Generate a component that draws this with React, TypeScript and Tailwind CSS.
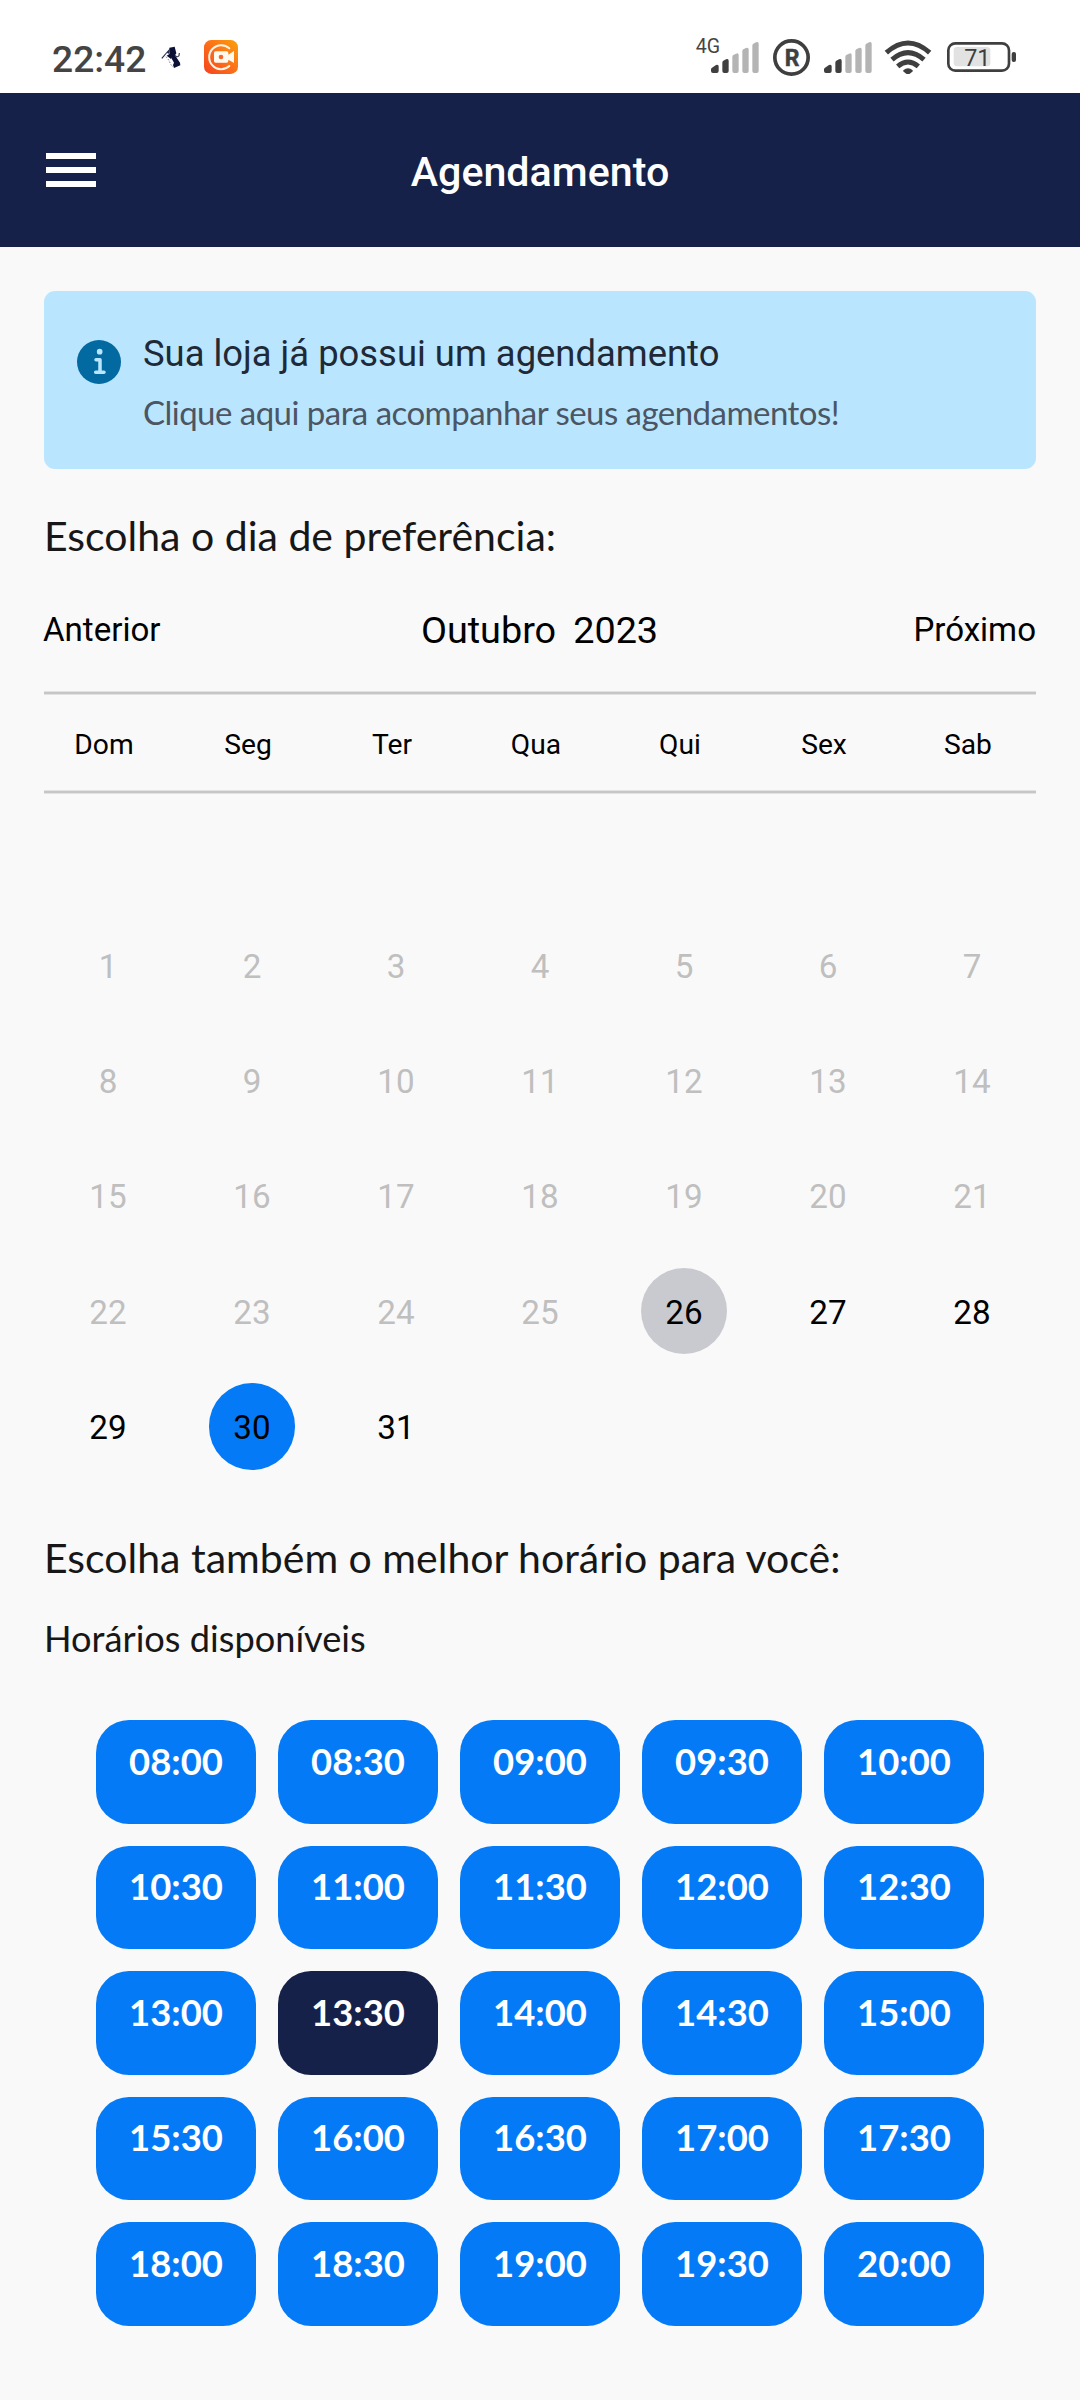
const weekdays = ["Dom", "Seg", "Ter", "Qua", "Qui", "Sex", "Sab"];
const days = Array.from({ length: 31 }, (_, i) => i + 1);
const today = 26;
const selectedDay = 30;
const times = Array.from({ length: 25 }, (_, i) => {
  const hour = String(8 + Math.floor(i / 2)).padStart(2, "0");
  return `${hour}:${i % 2 ? "30" : "00"}`;
});
const selectedTime = "13:30";

function RunnerIcon() {
  return (
    <svg className="ml-[9px] h-[34px] w-[34px]" viewBox="0 0 102 102">
      <path d="M46 23 62 20 67 40 63 46 78 68 79 76 60 84 57 75 60 68 47 45z" fill="#0b1136" />
      <path d="M22 54 48 25 46 42 39 39 25 56z" fill="#2b2f4f" />
      <path d="M38 47 50 40 52 58z" fill="#0b1136" />
      <path d="M63 46q6 8 12 1l1-8" fill="none" stroke="#3b3f5b" strokeWidth="3.5" />
      <path d="M36 50l8 10 7 14 6 7" fill="none" stroke="#80839a" strokeWidth="3" strokeDasharray="5 4" />
    </svg>
  );
}

function RecorderIcon() {
  return (
    <svg className="ml-[16px] h-[34px] w-[34px]" viewBox="0 0 102 102">
      <defs>
        <linearGradient id="rec" x1="1" y1="0" x2="0" y2="1">
          <stop offset="0" stopColor="#fba10b" />
          <stop offset="0.5" stopColor="#fb6f19" />
          <stop offset="1" stopColor="#f5421f" />
        </linearGradient>
      </defs>
      <rect width="102" height="102" rx="22" fill="url(#rec)" />
      <path d="M76 25A36 36 0 1 0 76 78" fill="none" stroke="#fff3e6" strokeWidth="6" strokeLinecap="round" />
      <path d="M35 34h33q5 0 5 5v5l17-11v36l-17-10v4q0 5-5 5H35q-5 0-5-5V39q0-5 5-5z" fill="#fffaf0" />
      <circle cx="51" cy="51" r="7" fill="#f9652a" />
    </svg>
  );
}

function SignalIcon({ className }: { className: string }) {
  return (
    <svg className={className} viewBox="0 0 144 93">
      <path d="M0 82q0-3 3-5l12-8q8-2 8 4v14q0 6-6 6H6q-6 0-6-6z" fill="#3f3f3f" />
      <path d="M34 62q0-4 3-6l8-4q8-3 8 4v31q0 6-6 6h-7q-6 0-6-6z" fill="#3f3f3f" />
      <path d="M64 45q0-4 3-6l8-4q8-3 8 4v48q0 6-6 6h-7q-6 0-6-6z" fill="#b4b4b4" />
      <path d="M94 28q0-4 3-6l8-4q8-3 8 4v65q0 6-6 6h-7q-6 0-6-6z" fill="#b4b4b4" />
      <path d="M124 11q0-4 3-6l8-4q8-3 8 4v82q0 6-6 6h-7q-6 0-6-6z" fill="#b4b4b4" />
    </svg>
  );
}

function RegisteredIcon() {
  return (
    <svg className="ml-[14px] h-[37px] w-[37px]" viewBox="0 0 111 111">
      <circle cx="55.5" cy="55.5" r="50" fill="none" stroke="#3f3f3f" strokeWidth="11" />
      <text x="57" y="80" textAnchor="middle" fontSize="69" fontWeight="700" fill="#3f3f3f" stroke="#3f3f3f" strokeWidth="1.5">
        R
      </text>
    </svg>
  );
}

function WifiIcon() {
  return (
    <svg className="ml-[12px] h-[34px] w-[48px]" viewBox="0 0 144 102">
      <g fill="none" stroke="#3f3f3f" strokeWidth="15">
        <path d="M7 38Q72-20 137 38" />
        <path d="M24 59Q72 17 120 59" />
        <path d="M41 79Q72 53 103 79" />
      </g>
      <path d="M58 91q14-13 28 0 1 2-1 4L75 103q-3 2-6 0L59 95q-2-2-1-4z" fill="#3f3f3f" />
    </svg>
  );
}

function BatteryIcon() {
  return (
    <svg className="ml-[15px] h-[30px] w-[69px]" viewBox="0 0 207 90">
      <rect x="4" y="4" width="182" height="82" rx="21" fill="none" stroke="#3f3f3f" strokeWidth="8" />
      <rect x="20" y="15" width="110" height="58" rx="10" fill="#e2e2e2" />
      <rect x="194" y="30" width="13" height="30" rx="6" fill="#3f3f3f" />
      <text x="91" y="71" textAnchor="middle" fontSize="70" fill="#3f3f3f">
        71
      </text>
    </svg>
  );
}

function StatusBar() {
  return (
    <div className="flex h-[93px] items-center bg-white pt-[21px] pr-[64px] pl-[52px] text-[#444444]">
      <span className="mt-[4px] w-[93px] text-[37.2px] leading-[40px] font-medium whitespace-nowrap">22:42</span>
      <RunnerIcon />
      <RecorderIcon />
      <div className="ml-auto flex items-center">
        <span className="-mt-[20px] text-[19.6px] leading-[24px]">4G</span>
        <SignalIcon className="-ml-[9px] h-[31px] w-[48px]" />
        <RegisteredIcon />
        <SignalIcon className="ml-[14px] h-[31px] w-[48px]" />
        <WifiIcon />
        <BatteryIcon />
      </div>
    </div>
  );
}

function Header() {
  return (
    <header className="grid h-[154px] grid-cols-3 items-center bg-[#162149]">
      <button className="ml-[46px] flex w-[50px] flex-col gap-[8px]" aria-label="Menu">
        <span className="h-[6px] w-full bg-white" />
        <span className="h-[6px] w-full bg-white" />
        <span className="h-[6px] w-full bg-white" />
      </button>
      <h1 className="pt-[4px] text-center text-[41.2px] leading-[50px] font-medium text-white">Agendamento</h1>
    </header>
  );
}

function InfoIcon() {
  return (
    <svg className="mt-[16px] h-[44px] w-[44px] shrink-0" viewBox="0 0 132 132">
      <circle cx="66" cy="66" r="66" fill="#0369a1" />
      <circle cx="68" cy="35" r="8.5" fill="#b9e6fe" />
      <path d="M57 59h12v37M56 97h25" fill="none" stroke="#b9e6fe" strokeWidth="10.5" strokeLinecap="round" strokeLinejoin="round" />
    </svg>
  );
}

function Divider() {
  return <div className="h-[4px] border-y border-[#e2e2e2] bg-[#c6c6c6]" />;
}

export default function App() {
  return (
    <div className="h-[2400px] w-[1080px] overflow-hidden bg-[#f9f9f9] font-['Roboto',sans-serif]">
      <StatusBar />
      <Header />
      <main className="px-[44px] pt-[44px]">
        <section className="flex h-[178px] rounded-[11px] bg-[#b9e6fe] pt-[33px] pl-[33px]">
          <InfoIcon />
          <div className="ml-[22px] pt-[1px]">
            <p className="text-[36.4px] leading-[58px] text-[#1f2937]">Sua loja já possui um agendamento</p>
            <p className="-mt-[1px] font-['Lato',sans-serif] text-[33px] leading-[60px] tracking-[-0.53px] text-[#4b5563]">
              Clique aqui para acompanhar seus agendamentos!
            </p>
          </div>
        </section>

        <h2 className="mt-[36px] font-['Lato',sans-serif] text-[41px] leading-[61px] text-[#171717]">
          Escolha o dia de preferência:
        </h2>

        <div className="mt-[3px] flex h-[122px] items-center justify-between text-[33.1px] text-black">
          <button className="-ml-px w-[260px] text-left">Anterior</button>
          <div className="flex gap-[17px] text-[37.8px]">
            <span>Outubro</span>
            <span>2023</span>
          </div>
          <button className="w-[260px] text-right">Próximo</button>
        </div>
        <Divider />
        <div className="-ml-[12px] grid h-[95px] w-[1008px] grid-cols-7 items-center pt-[5px] text-center text-[28.2px] text-black">
          {weekdays.map((d) => (
            <span key={d}>{d}</span>
          ))}
        </div>
        <Divider />
        <div className="-mx-[8px] mt-[114px] grid auto-rows-[115.2px] grid-cols-7 place-items-center text-[33.2px] leading-[40px]">
          {days.map((d) => (
            <div
              key={d}
              className={`flex h-[86.5px] w-[86.5px] items-center justify-center rounded-full pt-[3px] ${
                d < today ? "text-[#bfbfbf]" : "text-black"
              } ${d === today ? "bg-[#c9cad0]" : d === selectedDay ? "bg-[#057af6]" : ""}`}
            >
              {d}
            </div>
          ))}
        </div>

        <h2 className="mt-[44.1px] font-['Lato',sans-serif] text-[41px] leading-[60px] text-[#171717]">
          Escolha também o melhor horário para você:
        </h2>
        <h3 className="mt-[20px] font-['Lato',sans-serif] text-[36.2px] leading-[60px] text-[#171717]">
          Horários disponíveis
        </h3>

        <div className="mt-[52.1px] ml-[52px] grid w-[888px] grid-cols-5 gap-[22px] font-['Lato',sans-serif]">
          {times.map((t) => (
            <button
              key={t}
              className={`h-[103.5px] rounded-[33px] pb-[22px] text-[36.4px] leading-[44px] font-bold text-white ${
                t === selectedTime ? "bg-[#162149]" : "bg-[#057af6]"
              }`}
            >
              {t}
            </button>
          ))}
        </div>
      </main>
    </div>
  );
}
